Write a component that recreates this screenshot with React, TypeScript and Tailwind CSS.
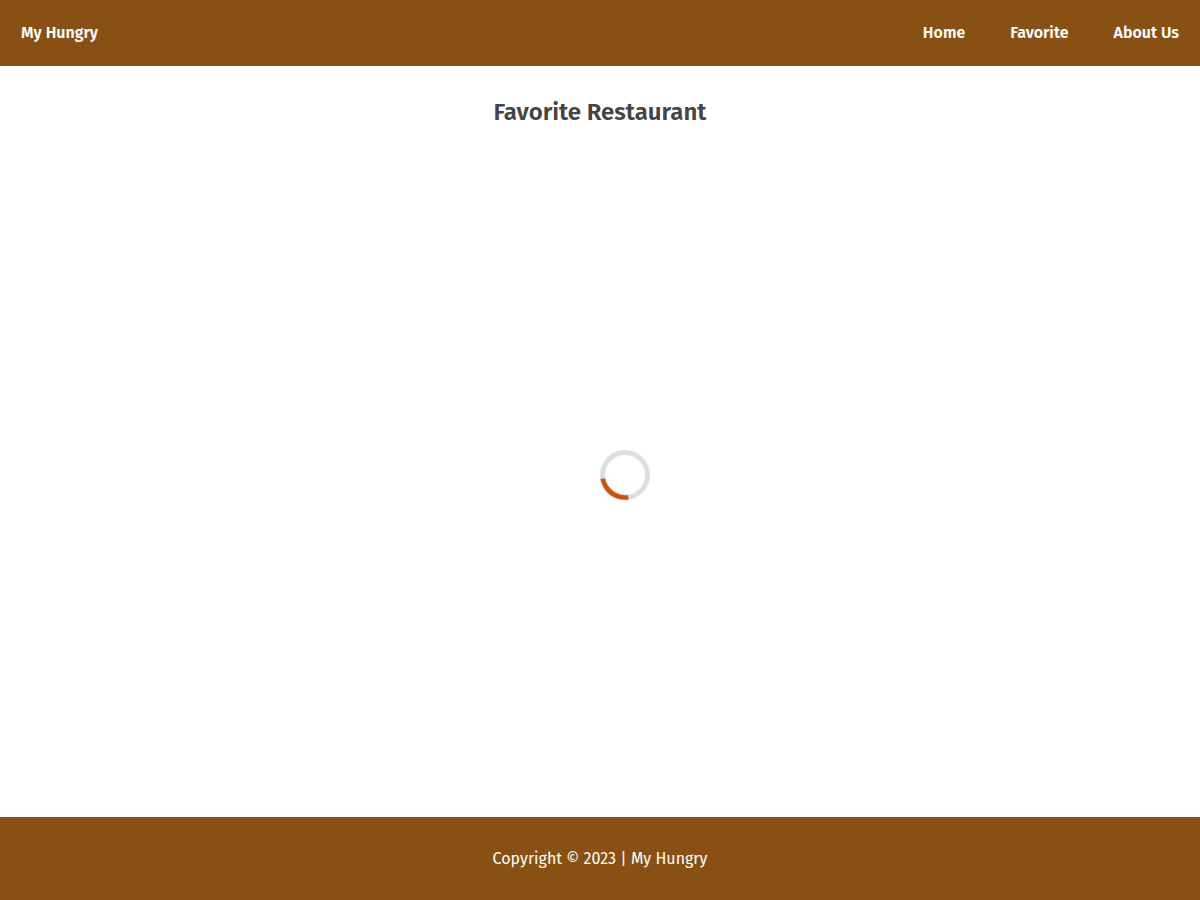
const links = [
  { label: 'Home', href: '#/home' },
  { label: 'Favorite', href: '#/favorite' },
  { label: 'About Us', href: '#/about' },
];

function Header() {
  return (
    <header className="flex items-center justify-between bg-[#885012] px-[21px] py-[21px] font-semibold text-white">
      <a href="#/home">My Hungry</a>
      <nav aria-label="Main">
        <ul className="flex gap-[45px]">
          {links.map((link) => (
            <li key={link.href}>
              <a href={link.href}>{link.label}</a>
            </li>
          ))}
        </ul>
      </nav>
    </header>
  );
}

function Spinner() {
  return (
    <div
      role="status"
      aria-label="Loading"
      className="fixed left-1/2 top-1/2 size-[50px] rotate-[216deg] rounded-full border-5 border-[#dddddd] border-t-[#cc5008]"
    />
  );
}

export default function App() {
  return (
    <div className="flex min-h-screen flex-col bg-white font-['Fira_Sans','Noto_Sans',sans-serif] text-base">
      <Header />
      <main className="grow px-5 pt-[30px]">
        <h1 className="text-center text-2xl font-semibold text-[#444444]">Favorite Restaurant</h1>
        <Spinner />
      </main>
      <footer className="bg-[#885012] px-5 pb-[29px] pt-[30px] text-center text-white">
        <p>Copyright © 2023 | My Hungry</p>
      </footer>
    </div>
  );
}
